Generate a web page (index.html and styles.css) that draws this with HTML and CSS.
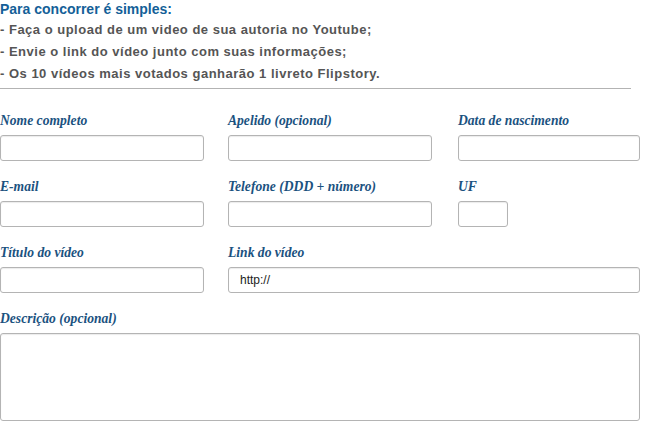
FILE: index.html
```html
<!DOCTYPE html>
<html lang="pt-BR">
<head>
  <meta charset="UTF-8">
  <title>Concurso Flipstory</title>
  <link rel="stylesheet" href="styles.css">
</head>
<body>

  <div class="rules">
    <h2>Para concorrer é simples:</h2>
    <ul>
      <li>- Faça o upload de um video de sua autoria no Youtube;</li>
      <li>- Envie o link do vídeo junto com suas informações;</li>
      <li>- Os 10 vídeos mais votados ganharão 1 livreto Flipstory.</li>
    </ul>
  </div>

  <form class="entry-form">
    <div class="field">
      <label for="nome">Nome completo</label>
      <input type="text" id="nome" />
    </div>
    <div class="field">
      <label for="apelido">Apelido (opcional)</label>
      <input type="text" id="apelido" />
    </div>
    <div class="field">
      <label for="nascimento">Data de nascimento</label>
      <input type="text" id="nascimento" />
    </div>

    <div class="field">
      <label for="email">E-mail</label>
      <input type="text" id="email" />
    </div>
    <div class="field">
      <label for="telefone">Telefone (DDD + número)</label>
      <input type="text" id="telefone" />
    </div>
    <div class="field">
      <label for="uf">UF</label>
      <input type="text" id="uf" class="short" />
    </div>

    <div class="field">
      <label for="titulo">Título do vídeo</label>
      <input type="text" id="titulo" />
    </div>
    <div class="field wide">
      <label for="link">Link do vídeo</label>
      <input type="text" id="link" value="http://" />
    </div>

    <div class="field full">
      <label for="descricao">Descrição (opcional)</label>
      <textarea id="descricao"></textarea>
    </div>
  </form>

</body>
</html>
```

FILE: styles.css
```css
/* Global */
body {
  margin: 0;
  padding: 0;
  background-color: #fff;
  font-family: 'Liberation Sans', Arial, sans-serif;
}

/* Rules block */
.rules {
  width: 631px;
  border-bottom: 1px solid #b3b3b3;
  padding-bottom: 3px;
}

.rules h2 {
  margin: 0;
  font-size: 14px;
  line-height: 18px;
  color: #145f98;
}

.rules ul {
  list-style: none;
  margin: 0;
  padding: 1px 0 0 0;
}

.rules li {
  font-size: 13px;
  font-weight: bold;
  line-height: 22px;
  letter-spacing: 0.5px;
  color: #555;
}

/* Form */
.entry-form {
  display: grid;
  grid-template-columns: 204px 206px 182px;
  column-gap: 24px;
  row-gap: 18px;
  padding-top: 24px;
}

.field label {
  display: block;
  font-family: 'Liberation Serif', 'Times New Roman', serif;
  font-style: italic;
  font-weight: bold;
  font-size: 13.6px;
  line-height: 16px;
  color: #1b527f;
  margin-bottom: 6px;
}

.field input,
.field textarea {
  display: block;
  box-sizing: border-box;
  width: 204px;
  height: 26px;
  margin: 0;
  padding: 0 11px;
  border: 1px solid #b4b4b4;
  border-radius: 3px;
  box-shadow: inset 0 1px 1px rgba(0, 0, 0, 0.08);
  font-family: 'Liberation Sans', Arial, sans-serif;
  font-size: 12px;
  color: #222;
  background-color: #fff;
  outline: none;
}

.field:nth-child(3) input {
  width: 182px;
}

.field input.short {
  width: 50px;
}

.field.wide {
  grid-column: 2 / 4;
}

.field.wide input {
  width: 412px;
}

.field.full {
  grid-column: 1 / 4;
}

.field textarea {
  width: 640px;
  height: 88px;
  resize: none;
}
```
